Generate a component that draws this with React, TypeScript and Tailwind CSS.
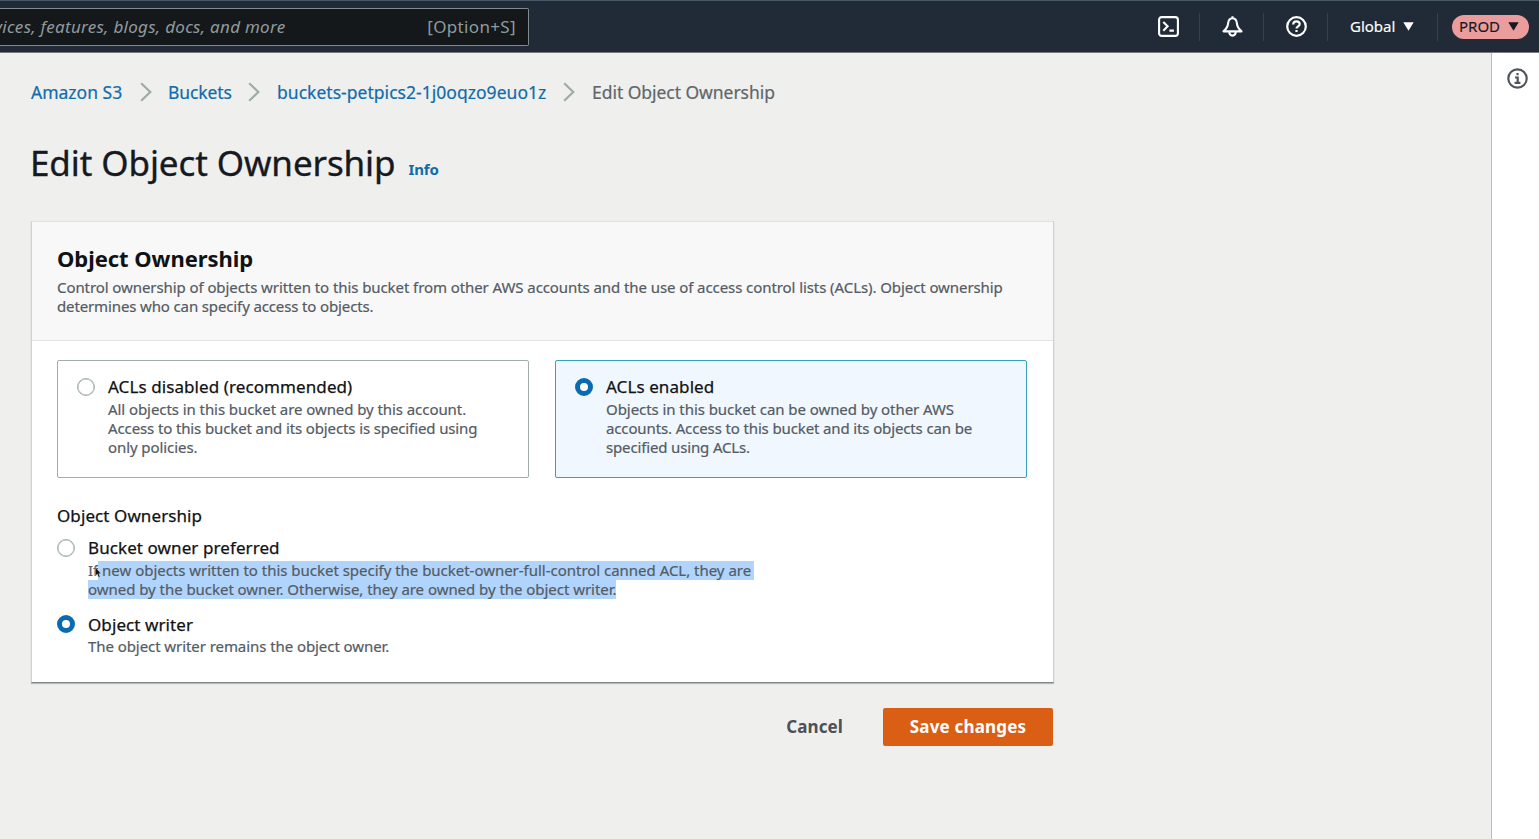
import React from "react";

function Radio({ checked }: { checked?: boolean }) {
  return checked ? (
    <span className="block size-[18px] shrink-0 rounded-full border-[5.5px] border-[#0a6cb0] bg-white" />
  ) : (
    <span className="block size-[18px] shrink-0 rounded-full border-[1.5px] border-[#a5b2b2] bg-white shadow-[inset_0_0_0_0.5px_#a5b2b2]" />
  );
}

function Chevron() {
  return (
    <svg className="h-[20px] w-[12px] shrink-0" viewBox="0 0 12 20" fill="none" stroke="#9dabaa" strokeWidth="2.2">
      <path d="M1.2 1.2 10.3 10 1.2 18.8" />
    </svg>
  );
}

function Caret() {
  return (
    <svg className="h-[9px] w-[11px] shrink-0" viewBox="0 0 11 9" fill="currentColor">
      <path d="M0.3 0.3h10.4L5.5 8.8z" />
    </svg>
  );
}

function Header() {
  return (
    <header className="flex h-[53px] shrink-0 items-center border-t border-b border-t-[#485866] border-b-[#7d7880] bg-[#212b37]">
      <div className="mr-[629px] flex h-[38px] w-[529px] items-center justify-between rounded-r-[2px] border border-l-0 border-[#7f8b8c] bg-[#14181b] pr-[12px] text-[17px] text-[#8f9b9b]">
        <span className="-ml-[6px] whitespace-nowrap text-[17px] tracking-[0.28px] italic">vices, features, blogs, docs, and more</span>
        <span className="tracking-[0.35px]">[Option+S]</span>
      </div>
      <svg className="size-[21px] shrink-0" viewBox="0 0 21 21" fill="none" stroke="#fff" strokeWidth="2.1">
        <rect x="1.1" y="1.1" width="18.8" height="18.8" rx="2.6" />
        <path d="M5.3 6 9.6 10.3 5.3 14.7M11.4 14.6h4.5" />
      </svg>
      <div className="ml-[20px] h-[28px] w-px bg-[#36414b]" />
      <svg className="ml-[22px] size-[21px] shrink-0" viewBox="0 0 21 21" fill="none" stroke="#fff" strokeWidth="2.1" strokeLinejoin="round">
        <path d="M10.5 2.3C7.400 2.300 6.400 4.600 6.100 7.400 5.800 11 4.200 13 1.500 15.400h18C16.800 13 15.200 11 14.900 7.400 14.600 4.600 13.600 2.300 10.500 2.300zM10.500 0.200v2M7.300 15.600c0 2.400 1.100 4 3.200 4s3.200-1.600 3.200-4" />
      </svg>
      <div className="ml-[20px] h-[28px] w-px bg-[#36414b]" />
      <svg className="ml-[22px] size-[21px] shrink-0" viewBox="0 0 21 21" fill="none" stroke="#fff" strokeWidth="2.2">
        <circle cx="10.500" cy="10.500" r="9.300" />
        <path d="M7.200 8.500c0-2 1.300-3.200 3.300-3.200s3.200 1.100 3.200 2.800c0 2.300-3.200 2.300-3.200 4.500M10.500 13.900v2.200" />
      </svg>
      <div className="ml-[20px] h-[28px] w-px bg-[#36414b]" />
      <div className="ml-[22px] flex items-center gap-[7px] text-[15px] text-white [-webkit-text-stroke:0.15px]">
        <span className="w-[46px]">Global</span>
        <Caret />
      </div>
      <div className="ml-[23px] h-[28px] w-px bg-[#36414b]" />
      <div className="ml-[14px] flex h-[24px] w-[77px] items-center gap-[7px] rounded-full bg-[#eb9d9d] pl-[7px] text-[15px] text-[#16191f] [-webkit-text-stroke:0.15px]">
        <span className="w-[42px]">PROD</span>
        <Caret />
      </div>
    </header>
  );
}

const small = "block whitespace-nowrap text-[15px] leading-[19.2px] text-[#545b64] [-webkit-text-stroke:0.2px]";
const label = "block whitespace-nowrap text-[17px] leading-[24px] tracking-[0.09px] text-[#101214] [-webkit-text-stroke:0.25px]";

export default function App() {
  return (
    <div className="flex h-[839px] w-[1539px] flex-col overflow-hidden bg-[#efefed] font-['Noto_Sans','Open_Sans',sans-serif]">
      <Header />
      <div className="flex flex-1">
        <main className="w-[1491px] pl-[31px]">
          <nav className="mt-[27px] flex h-[24px] items-center text-[17.5px] text-[#0f6cab] [-webkit-text-stroke:0.2px]">
            <span className="w-[109px] whitespace-nowrap">Amazon S3</span>
            <Chevron />
            <span className="ml-[16px] w-[80px] tracking-[-0.1px]">Buckets</span>
            <Chevron />
            <span className="ml-[17px] w-[286px] whitespace-nowrap tracking-[0.03px]">buckets-petpics2-1j0oqzo9euo1z</span>
            <Chevron />
            <span className="ml-[17px] whitespace-nowrap text-[#5f666b] tracking-[-0.04px]">Edit Object Ownership</span>
          </nav>
          <div className="mt-[34px] flex h-[50px] items-baseline gap-[13px]">
            <h1 className="-ml-px text-[35px] leading-[50px] tracking-[-0.1px] whitespace-nowrap text-[#16191f] [-webkit-text-stroke:0.35px]">Edit Object Ownership</h1>
            <a className="relative -top-px text-[15px] font-bold tracking-[-0.1px] text-[#0f6cab]">Info</a>
          </div>

          <section className="mt-[33px] flex h-[462px] w-[1023px] flex-col border-x border-t border-b border-x-[#cfd2d2] border-t-[#e0e1e1] border-b-[#7b8484] bg-white shadow-[0_1px_1px_#b5bbbb]">
            <div className="h-[119px] border-b border-[#e3e5e5] bg-[#f8f8f8] px-[25px] pt-[20px]">
              <h2 className="text-[22px] leading-[32px] font-bold tracking-[-0.05px] text-[#101214]">Object Ownership</h2>
              <p className="pt-[4px]">
                <span className={`${small} tracking-[-0.08px]`}>Control ownership of objects written to this bucket from other AWS accounts and the use of access control lists (ACLs). Object ownership</span>
                <span className={`${small} tracking-[-0.13px]`}>determines who can specify access to objects.</span>
              </p>
            </div>

            <div className="flex gap-[26px] px-[25px] pt-[19px]">
              <div className="flex h-[118px] w-[472px] gap-[13px] rounded-[2px] border-[1.5px] border-[#a0adac] pt-[14px] pl-[19px]">
                <div className="pt-[3px]"><Radio /></div>
                <div>
                  <span className={label}>ACLs disabled (recommended)</span>
                  <div className="pt-px">
                    <span className={`${small} tracking-[-0.07px]`}>All objects in this bucket are owned by this account.</span>
                    <span className={`${small} tracking-[-0.12px]`}>Access to this bucket and its objects is specified using</span>
                    <span className={`${small} tracking-[-0.08px]`}>only policies.</span>
                  </div>
                </div>
              </div>
              <div className="flex h-[118px] w-[472px] gap-[13px] rounded-[2px] border-[1.5px] border-[#35a3bb] bg-[#f0f7fe] pt-[14px] pl-[19px]">
                <div className="pt-[3px]"><Radio checked /></div>
                <div>
                  <span className={label}>ACLs enabled</span>
                  <div className="pt-px">
                    <span className={`${small} tracking-[-0.06px]`}>Objects in this bucket can be owned by other AWS</span>
                    <span className={`${small} tracking-[-0.13px]`}>accounts. Access to this bucket and its objects can be</span>
                    <span className={`${small} tracking-[-0.15px]`}>specified using ACLs.</span>
                  </div>
                </div>
              </div>
            </div>

            <div className="px-[25px] pt-[26px]">
              <span className={label}>Object Ownership</span>
              <div className="mt-[8px] flex gap-[13px]">
                <div className="pt-[3px]"><Radio /></div>
                <div className="relative">
                  <span className={label}>Bucket owner preferred</span>
                  <div className="pt-px">
                    <span className={`${small} tracking-[-0.02px]`}>If<mark className="inline-block h-[19px] bg-[#b0d4fb] text-[#545b64]">&nbsp;new objects written to this bucket specify the bucket-owner-full-control canned ACL, they are<span className="inline-block w-[3px]" /></mark></span>
                    <span className={`${small} tracking-[-0.04px]`}><mark className="inline-block h-[19px] bg-[#b0d4fb] text-[#545b64]">owned by the bucket owner. Otherwise, they are owned by the object writer.</mark></span>
                  </div>
                  <svg className="absolute top-[31px] left-[7px] h-[12px] w-[8px]" viewBox="0 0 9 14">
                    <path d="M0.500 0.500v9.500l2-1.700 1.600 3.700 1.600-.7-1.500-3.500 2.500-.1z" fill="#111" stroke="#d5e5f5" strokeWidth=".4" />
                  </svg>
                </div>
              </div>
              <div className="mt-[14px] flex gap-[13px]">
                <div className="pt-[2px]"><Radio checked /></div>
                <div>
                  <span className={label}>Object writer</span>
                  <span className={`${small} tracking-[-0.07px]`}>The object writer remains the object owner.</span>
                </div>
              </div>
            </div>
          </section>

          <div className="mt-[25px] flex w-[1022px] items-center justify-end gap-[40px] text-[17px] font-bold">
            <button className="tracking-[0.1px] text-[#4b5158]">Cancel</button>
            <button className="h-[38px] w-[170px] rounded-[2px] bg-[#da5f15] tracking-[0.17px] text-white">Save changes</button>
          </div>
        </main>
        <aside className="flex w-[48px] justify-center border-l border-[#b9bdbd] bg-white pt-[15px] pl-[4px]">
          <svg className="size-[21px]" viewBox="0 0 21 21" fill="none" stroke="#50565b" strokeWidth="2.2">
            <circle cx="10.500" cy="10.500" r="9.200" />
            <path d="M10.500 4.900v2.300M8 9.500h2.700v5.200M7.600 14.800h5.800" />
          </svg>
        </aside>
      </div>
    </div>
  );
}
